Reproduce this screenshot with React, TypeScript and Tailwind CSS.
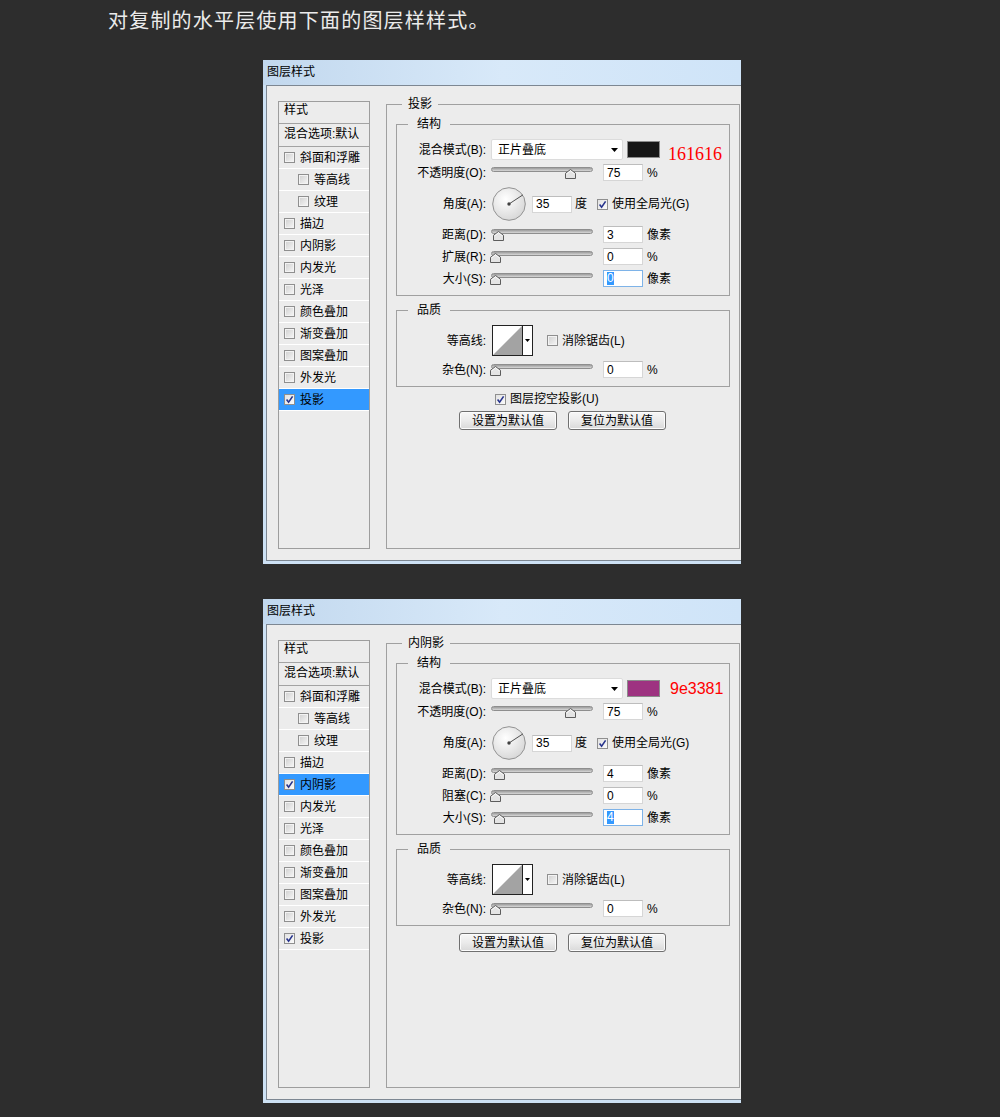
import React from 'react';

const cx = (...c: (string | false | undefined)[]) => c.filter(Boolean).join(' ');

const layers = [
  { name: '斜面和浮雕', sub: false },
  { name: '等高线', sub: true },
  { name: '纹理', sub: true },
  { name: '描边', sub: false },
  { name: '内阴影', sub: false },
  { name: '内发光', sub: false },
  { name: '光泽', sub: false },
  { name: '颜色叠加', sub: false },
  { name: '渐变叠加', sub: false },
  { name: '图案叠加', sub: false },
  { name: '外发光', sub: false },
  { name: '投影', sub: false },
];

function Check({ on, className }: { on?: boolean; className?: string }) {
  return (
    <span
      className={cx(
        'flex h-[11px] w-[11px] shrink-0 items-center justify-center border border-[#8f8f8f]',
        on
          ? 'bg-linear-to-br from-[#e2e2e2] to-[#fbfbfb]'
          : 'bg-linear-to-br from-[#cfcfcf] to-[#f7f7f7] shadow-[inset_0_0_0_1px_#f3f3f3]',
        className
      )}
    >
      {on && (
        <svg width="9" height="9" viewBox="0 0 9 9">
          <path d="M1.6 4.6 L3.6 7.2 L7.6 1.4" fill="none" stroke="#26338c" strokeWidth="1.6" />
        </svg>
      )}
    </span>
  );
}

function Field({ value, focus, className }: { value: string; focus?: boolean; className?: string }) {
  return (
    <div
      className={cx(
        'flex h-[17px] w-[40px] shrink-0 items-center border bg-white pl-[3px]',
        focus ? 'border-[#7eb3e8]' : 'border-[#d6d6d6] border-t-[#bdbdbd]',
        className
      )}
    >
      {focus ? <span className="bg-[#3399ff] leading-[13px] text-white">{value}</span> : value}
    </div>
  );
}

function Slider({ value }: { value: number }) {
  return (
    <div className="relative ml-[5px] h-[11px] w-[102px] shrink-0">
      <div className="h-[5px] w-full rounded-full border border-[#8e8e8e] bg-linear-to-b from-[#9c9c9c] to-[#d8d8d8]" />
      <svg className="absolute top-[2px]" style={{ left: value - 1.5 }} width="11" height="10" viewBox="0 0 11 10">
        <path d="M5.5 0.5 L10.5 4.3 V9.5 H0.5 V4.3 Z" fill="#e4e4e4" stroke="#5c5c5c" />
        <path d="M1.5 5 L5.5 1.8 L9.5 5" fill="none" stroke="#fafafa" />
      </svg>
    </div>
  );
}

function Dial() {
  return (
    <svg className="ml-[6px] shrink-0" width="34" height="34" viewBox="0 0 34 34">
      <defs>
        <radialGradient id="dialfill" cx="40%" cy="35%" r="70%">
          <stop offset="0%" stopColor="#ffffff" />
          <stop offset="100%" stopColor="#d6d6d6" />
        </radialGradient>
      </defs>
      <circle cx="17" cy="17" r="16.3" fill="url(#dialfill)" stroke="#929292" />
      <line x1="17" y1="17" x2="31" y2="7.8" stroke="#505050" strokeWidth="1" />
      <circle cx="17" cy="17" r="1.7" fill="#404040" />
    </svg>
  );
}

function SliderRow({
  label,
  value,
  field,
  unit,
  focus,
  h,
}: {
  label: string;
  value: number;
  field: string;
  unit: string;
  focus?: boolean;
  h: string;
}) {
  return (
    <div className={cx('flex items-center', h)}>
      <span className="w-[89px] shrink-0 text-right">{label}</span>
      <Slider value={value} />
      <Field value={field} focus={focus} className="ml-[10px]" />
      <span className="ml-[4px]">{unit}</span>
    </div>
  );
}

function Legend({ text, className }: { text: string; className: string }) {
  return <span className={cx('absolute -top-[9px] bg-[#ececec] leading-[16px]', className)}>{text}</span>;
}

type DialogProps = {
  legend: string;
  selected: string;
  checked: string[];
  swatch: string;
  colorText: string;
  serif?: boolean;
  midLabel: string;
  distance: number;
  mid: number;
  size: number;
  knockout?: boolean;
};

function StyleDialog(p: DialogProps) {
  return (
    <div className="ml-[263px] flex h-[504px] w-[478px] flex-col bg-[#cde1f4] text-[12px] leading-[14px] text-black">
      <div className="flex h-[25px] shrink-0 items-center bg-linear-to-r from-[#c2d8ee] via-[#d8e9f9] to-[#cfe4f8] pb-[2px] pl-[4px]">
        图层样式
      </div>
      <div className="flex-1 pb-[3px] pl-[3px]">
        <div className="flex h-full items-start border-y border-l border-[#7d8792] bg-[#ececec] pl-[11px] pt-[15px]">
          {/* 左侧样式列表 */}
          <div className="flex h-[448px] w-[92px] shrink-0 flex-col border border-[#9d9d9d]">
            <div className="flex h-[22px] items-center border-b border-[#a3a3a3] pb-[5px] pl-[5px]">样式</div>
            <div className="flex h-[23px] items-center border-b border-[#a3a3a3] pb-[3px] pl-[5px]">混合选项:默认</div>
            {layers.map((l) => (
              <div
                key={l.name}
                className={cx(
                  'flex h-[22px] items-center gap-[5px] border-b border-white',
                  l.sub ? 'pl-[19px]' : 'pl-[5px]',
                  p.selected === l.name && 'bg-[#3399ff]'
                )}
              >
                <Check on={p.checked.includes(l.name)} />
                <span>{l.name}</span>
              </div>
            ))}
          </div>

          {/* 右侧设置面板 */}
          <div className="relative ml-[16px] mt-[3px] flex h-[445px] w-[354px] shrink-0 flex-col border border-[#a0a0a0] pl-[9px] pt-[19px]">
            <Legend text={p.legend} className="left-[15px] px-[6px]" />

            <div className="relative h-[172px] w-[334px] border border-[#a0a0a0] pt-[13px]">
              <Legend text="结构" className="left-[11px] px-[9px]" />
              <div className="flex h-[23px] items-center">
                <span className="w-[89px] shrink-0 text-right">混合模式(B):</span>
                <div className="ml-[5px] flex h-[21px] w-[132px] shrink-0 items-center justify-between rounded-[2px] border border-[#dcdcdc] bg-white pl-[6px] pr-[4px]">
                  <span>正片叠底</span>
                  <svg width="7" height="4" viewBox="0 0 7 4">
                    <path d="M0 0 H7 L3.5 4 Z" fill="#000" />
                  </svg>
                </div>
                <div className="ml-[4px] h-[17px] w-[33px] shrink-0 border border-[#8c8c8c]" style={{ backgroundColor: p.swatch }} />
                {p.serif ? (
                  <span className="ml-[8px] mt-[8px] font-['Liberation_Serif',serif] text-[18px] leading-[18px] text-[#ff0000]">
                    {p.colorText}
                  </span>
                ) : (
                  <span className="ml-[10px] font-['Liberation_Sans',sans-serif] text-[16px] leading-[16px] text-[#ff0000]">
                    {p.colorText}
                  </span>
                )}
              </div>
              <SliderRow label="不透明度(O):" value={75} field="75" unit="%" h="h-[23px]" />
              <div className="flex h-[40px] items-center">
                <span className="w-[89px] shrink-0 text-right">角度(A):</span>
                <Dial />
                <Field value="35" className="ml-[6px]" />
                <span className="ml-[3px]">度</span>
                <Check on className="ml-[10px]" />
                <span className="ml-[4px]">使用全局光(G)</span>
              </div>
              <SliderRow label="距离(D):" value={p.distance} field={String(p.distance)} unit="像素" h="h-[21px]" />
              <SliderRow label={p.midLabel} value={p.mid} field={String(p.mid)} unit="%" h="h-[23px]" />
              <SliderRow label="大小(S):" value={p.size} field={String(p.size)} unit="像素" focus h="h-[21px]" />
            </div>

            <div className="relative mt-[14px] h-[77px] w-[334px] border border-[#a0a0a0] pt-[14px]">
              <Legend text="品质" className="left-[11px] px-[9px]" />
              <div className="flex h-[31px] items-center">
                <span className="w-[89px] shrink-0 text-right">等高线:</span>
                <svg className="ml-[6px] shrink-0" width="41" height="31" viewBox="0 0 41 31">
                  <rect x="0.5" y="0.5" width="40" height="30" fill="#fff" stroke="#222" />
                  <path d="M1 30 L30 1 V30 Z" fill="#a3a3a3" />
                  <line x1="30.5" y1="0.5" x2="30.5" y2="30.5" stroke="#222" />
                  <path d="M33 14 H38 L35.5 17 Z" fill="#000" />
                </svg>
                <Check className="ml-[14px]" />
                <span className="ml-[4px]">消除锯齿(L)</span>
              </div>
              <div className="mt-[3px]">
                <SliderRow label="杂色(N):" value={0} field="0" unit="%" h="h-[21px]" />
              </div>
            </div>

            {p.knockout && (
              <div className="mt-[3px] flex h-[18px] items-center pl-[99px]">
                <Check on />
                <span className="ml-[4px]">图层挖空投影(U)</span>
              </div>
            )}

            <div className={cx('flex gap-[11px] pl-[63px]', p.knockout ? 'mt-[3px]' : 'mt-[7px]')}>
              {['设置为默认值', '复位为默认值'].map((t) => (
                <button
                  key={t}
                  className="flex h-[19px] w-[98px] items-center justify-center rounded-[3px] border border-[#707070] bg-linear-to-b from-[#f7f7f7] via-[#ebebeb] to-[#d9d9d9] shadow-[inset_0_0_0_1px_#fcfcfc]"
                >
                  {t}
                </button>
              ))}
            </div>
          </div>
        </div>
      </div>
    </div>
  );
}

export default function App() {
  return (
    <div className="min-h-[1117px] w-full bg-[#2d2d2d] font-['Liberation_Sans','Noto_Sans_CJK_SC',sans-serif]">
      <div className="h-[60px] pl-[108px] font-['Noto_Sans_CJK_SC',sans-serif] text-[20px] leading-[40px] tracking-[1.2px] text-[#ebebeb]">
        对复制的水平层使用下面的图层样样式。
      </div>
      <StyleDialog
        legend="投影"
        selected="投影"
        checked={['投影']}
        swatch="#161616"
        colorText="161616"
        serif
        midLabel="扩展(R):"
        distance={3}
        mid={0}
        size={0}
        knockout
      />
      <div className="h-[35px]" />
      <StyleDialog
        legend="内阴影"
        selected="内阴影"
        checked={['内阴影', '投影']}
        swatch="#9e3381"
        colorText="9e3381"
        midLabel="阻塞(C):"
        distance={4}
        mid={0}
        size={4}
      />
    </div>
  );
}
